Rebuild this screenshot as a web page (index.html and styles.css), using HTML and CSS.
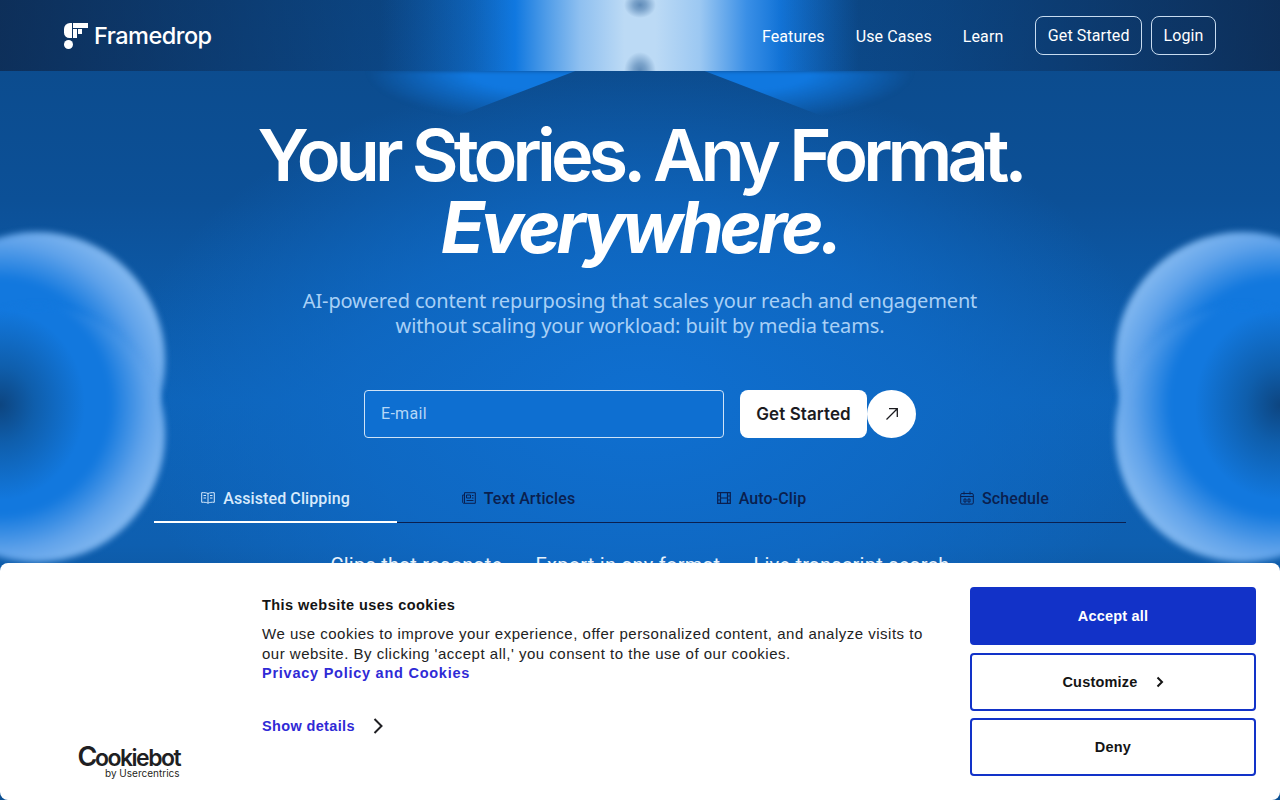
FILE: index.html
```html
<!DOCTYPE html>
<html lang="en">
  <head>
    <meta charset="UTF-8" />
    <meta name="viewport" content="width=device-width, initial-scale=1.0" />
    <title>Framedrop</title>
    <link rel="stylesheet" href="styles.css">
  </head>
  <body>
    <div class="page">
      <!-- background shapes -->
      <div class="beam">
        <span class="beam-dot beam-dot-top"></span>
        <span class="beam-dot beam-dot-low"></span>
      </div>
      <div class="wing wing-l"></div>
      <div class="wing wing-r"></div>
      <div class="blob blob-lt"></div>
      <div class="blob blob-lb"></div>
      <div class="blob blob-rt"></div>
      <div class="blob blob-rb"></div>
      <div class="shade shade-l"></div>
      <div class="shade shade-r"></div>

      <header class="topbar">
        <a class="brand" href="#">
          <svg class="brand-mark" width="24" height="26" viewBox="0 0 24 26">
            <path fill="#fff" d="M0 6a6 6 0 0 1 6-6h2v15H5.500A5.500 5.500 0 0 1 0 9.500z" />
            <path fill="#fff" d="M9 0h15v5H9z" />
            <path fill="#fff" d="M9 6h4v9H9zM14 6h4v5h-4z" />
            <circle fill="#fff" cx="4.500" cy="21.500" r="4.500" />
          </svg>
          <span>Framedrop</span>
        </a>
        <nav class="nav">
          <a href="#">Features</a>
          <a href="#">Use Cases</a>
          <a href="#">Learn</a>
        </nav>
        <div class="auth">
          <a class="ghost-btn" href="#">Get Started</a>
          <a class="ghost-btn" href="#">Login</a>
        </div>
      </header>

      <main class="hero">
        <h1>Your Stories. Any Format.<br /><em>Everywhere.</em></h1>
        <p class="lead">AI-powered content repurposing that scales your reach and engagement<br />without scaling your workload: built by media teams.</p>

        <form class="signup">
          <input type="text" placeholder="E-mail" />
          <button type="button" class="cta">Get Started</button>
          <span class="cta-arrow">
            <svg width="14" height="14" viewBox="0 0 14 14" fill="none" stroke="#1b1b1f" stroke-width="1.300">
              <path d="M1.500 12.500 12 2M4 1.700h8.300V10" />
            </svg>
          </span>
        </form>

        <div class="tabs">
          <div class="tab active">
            <svg width="14" height="12" viewBox="0 0 14 12" fill="none" stroke="currentColor"><path d="M7 1.500C5.500.7 3 .5.700.7v9.600c2.300-.2 4.800 0 6.300.9 1.500-.9 4-1.100 6.300-.9V.7C11 .5 8.500.7 7 1.500zM7 1.500v9.700M2.500 3.500h2.500M2.500 6h2.500M9 3.500h2.500M9 6h2.500" /></svg>
            Assisted Clipping
          </div>
          <div class="tab">
            <svg width="14" height="12" viewBox="0 0 14 12" fill="none" stroke="currentColor"><path d="M2.500.7h10.800v10.600H2.500zM2.500 3H.7v7a1.300 1.300 0 0 0 1.800 1.300M4.500 3h4v3h-4zM10 3.500h1.500M10 6h1.500M4.500 8.500h7" /></svg>
            Text Articles
          </div>
          <div class="tab">
            <svg width="14" height="12" viewBox="0 0 14 12" fill="none" stroke="currentColor" stroke-width="1.200"><path d="M.7.7h12.600v10.600H.7zM3.500.7v10.600M10.500.7v10.600M.7 4h2.800M.7 8h2.800M10.500 4h2.800M10.500 8h2.800M3.500 6h7" /></svg>
            Auto-Clip
          </div>
          <div class="tab">
            <svg width="14" height="14" viewBox="0 0 14 14" fill="none" stroke="currentColor"><path d="M2 2.500h10a1.300 1.300 0 0 1 1.300 1.300v8a1.300 1.300 0 0 1-1.300 1.300H2a1.300 1.300 0 0 1-1.300-1.300v-8A1.300 1.300 0 0 1 2 2.500zM4 .5v3M10 .5v3M.7 5.500h12.600M4 8h2v3H4zM8 8h2v3H8z" /></svg>
            Schedule
          </div>
        </div>

        <div class="subtabs">
          <span>Clips that resonate</span>
          <span>Export in any format</span>
          <span>Live transcript search</span>
        </div>
      </main>

      <!-- cookie banner -->
      <aside class="cookie">
        <div class="cookie-brand">
          <div class="cb-name"><span class="cb-c">C</span>ookiebot</div>
          <div class="cb-sub">by Usercentrics</div>
        </div>
        <div class="cookie-text">
          <h2>This website uses cookies</h2>
          <p>We use cookies to improve your experience, offer personalized content, and analyze visits to our website. By clicking 'accept all,' you consent to the use of our cookies.</p>
          <a class="policy" href="#">Privacy Policy and Cookies</a>
          <a class="details" href="#">
            Show details
            <svg width="10" height="16" viewBox="0 0 10 16" fill="none" stroke="#1f1f23" stroke-width="2"><path d="M1.500 1 8.500 8l-7 7" /></svg>
          </a>
        </div>
        <div class="cookie-actions">
          <button class="ck-btn ck-accept">Accept all</button>
          <button class="ck-btn">Customize
            <svg width="8" height="12" viewBox="0 0 8 12" fill="none" stroke="#141414" stroke-width="2"><path d="M1.500 1.500 6 6l-4.500 4.500" /></svg>
          </button>
          <button class="ck-btn">Deny</button>
        </div>
      </aside>
    </div>
  </body>
</html>
```
FILE: styles.css
```css
* {
  box-sizing: border-box;
}
html,
body {
  margin: 0;
  height: 100%;
}
body {
  font-family: "Roboto", "Noto Sans", sans-serif;
  color: #fff;
  overflow: hidden;
}
a {
  color: inherit;
  text-decoration: none;
}

.page {
  position: relative;
  width: 1280px;
  height: 800px;
  overflow: hidden;
  background:
    radial-gradient(ellipse 520px 330px at 640px 400px, #0f6fd0 0%, rgba(15, 107, 200, 0.75) 55%, rgba(15, 107, 200, 0) 100%),
    linear-gradient(180deg, #0c4a8a 0%, #0c5097 25%, #0d63b8 50%, #0e5fb0 68%, #0b4f92 80%);
}

/* background shapes */
.beam {
  position: absolute;
  left: 380px;
  top: 0;
  width: 520px;
  height: 71px;
  background: linear-gradient(90deg, rgba(16, 120, 224, 0) 0%, rgba(16, 120, 224, 0.6) 18%, #1078e0 26%, #4f9ce8 32%, #8fc0f0 38.500%, #bcdaf5 47%, #bcdaf5 53%, #9cc8f2 61.500%, #3a8fe6 70.500%, #1274d8 77%, rgba(16, 120, 224, 0) 92%);
}
.beam-dot {
  position: absolute;
  left: 244px;
  width: 32px;
  height: 26px;
  border-radius: 50%;
  background: radial-gradient(closest-side, #5f8bb8 0%, rgba(95, 139, 184, 0.7) 40%, rgba(95, 139, 184, 0) 100%);
}
.beam-dot-top {
  top: -8px;
}
.beam-dot-low {
  top: 52px;
  height: 38px;
  clip-path: inset(0 0 19px 0);
}
.wing {
  position: absolute;
  top: 71px;
  width: 240px;
  height: 70px;
  overflow: hidden;
}
.wing::before {
  content: "";
  display: block;
  width: 100%;
  height: 100%;
  background: radial-gradient(ellipse 170px 50px at 80% 0, #1078e0 0%, #1078e0 40%, rgba(16, 120, 224, 0) 100%);
  filter: blur(2px);
}
.wing-l {
  left: 345px;
  clip-path: polygon(0 0, 96% 0, 20% 100%, 0 100%);
}
.wing-r {
  left: 695px;
  clip-path: polygon(4% 0, 100% 0, 100% 100%, 80% 100%);
}
.wing-r::before {
  background: radial-gradient(ellipse 170px 50px at 20% 0, #1078e0 0%, #1078e0 40%, rgba(16, 120, 224, 0) 100%);
}
.blob {
  position: absolute;
  width: 256px;
  height: 256px;
  border-radius: 50%;
  filter: blur(3px);
}
.blob-lt {
  left: -91px;
  top: 232px;
  background: radial-gradient(circle 185px at 35% 62%, #1278de 0%, #1278de 60%, #5fa2ea 80%, #84b9f0 95%);
}
.blob-lb {
  left: -91px;
  top: 306px;
  background: radial-gradient(circle 185px at 35% 38%, #1278de 0%, #1278de 60%, #5fa2ea 80%, #84b9f0 95%);
}
.blob-rt {
  right: -91px;
  top: 232px;
  background: radial-gradient(circle 185px at 65% 62%, #1278de 0%, #1278de 60%, #5fa2ea 80%, #84b9f0 95%);
}
.blob-rb {
  right: -91px;
  top: 306px;
  background: radial-gradient(circle 185px at 65% 38%, #1278de 0%, #1278de 60%, #5fa2ea 80%, #84b9f0 95%);
}
.shade {
  position: absolute;
  top: 310px;
  width: 170px;
  height: 190px;
  border-radius: 50%;
  background: radial-gradient(closest-side, #0d4580 0%, rgba(13, 80, 145, 0.65) 40%, rgba(18, 120, 222, 0) 100%);
}
.shade-l {
  left: -85px;
}
.shade-r {
  right: -85px;
}

/* header */
.topbar {
  position: relative;
  display: flex;
  align-items: center;
  height: 71px;
  padding: 0 64px;
  background:
    linear-gradient(90deg, rgba(14, 34, 66, 0.68) 0%, rgba(10, 50, 100, 0.3) 28%, rgba(10, 50, 100, 0) 40%, rgba(10, 50, 100, 0) 60%, rgba(10, 50, 100, 0.3) 74%, rgba(14, 34, 66, 0.68) 100%);
}
.brand {
  display: flex;
  align-items: center;
  gap: 6px;
  margin-right: auto;
  font-family: "Inter", sans-serif;
  font-size: 23.500px;
  font-weight: 500;
  letter-spacing: -0.5px;
}
.brand-mark {
  margin-top: 1px;
}
.nav {
  display: flex;
  gap: 31px;
  font-size: 16px;
  letter-spacing: 0.1px;
  margin-right: 32px;
  padding-top: 2px;
}
.auth {
  display: flex;
  gap: 9px;
}
.ghost-btn {
  display: block;
  height: 39px;
  padding: 0 11.500px;
  line-height: 37px;
  font-size: 16px;
  letter-spacing: 0.1px;
  border: 1px solid #c8dcf0;
  border-radius: 8px;
}

/* hero */
.hero {
  position: relative;
  display: flex;
  flex-direction: column;
  align-items: center;
  padding-top: 48px;
}
.hero h1 {
  margin: 0;
  font-family: "Inter", sans-serif;
  font-size: 72px;
  line-height: 72px;
  font-weight: 600;
  letter-spacing: -4.9px;
  text-align: center;
}
.hero h1 em {
  font-weight: 700;
  font-style: italic;
  letter-spacing: -4.200px;
}
.lead {
  margin: 25px 0 0;
  font-family: "Noto Sans", sans-serif;
  font-size: 20px;
  line-height: 25px;
  letter-spacing: -0.14px;
  color: #a8d0f6;
  text-align: center;
}
.signup {
  display: flex;
  margin-top: 52px;
  height: 48px;
}
.signup input {
  width: 360px;
  height: 48px;
  padding: 0 16px 2px;
  margin-right: 16px;
  border: 1px solid #cfe3f7;
  border-radius: 4px;
  background: #0e6fd1;
  color: #fff;
  font-family: "Roboto", sans-serif;
  font-size: 16px;
  letter-spacing: 0.3px;
  outline: none;
}
.signup input::placeholder {
  color: #b5d7f7;
  opacity: 1;
}
.cta {
  width: 127px;
  height: 48px;
  border: 0;
  border-radius: 8px;
  background: #fff;
  color: #1b1b1f;
  font-family: "Inter", sans-serif;
  font-size: 17px;
  font-weight: 600;
  letter-spacing: 0.1px;
}
.cta-arrow {
  display: flex;
  align-items: center;
  justify-content: center;
  width: 49px;
  height: 48px;
  border-radius: 50%;
  background: #fff;
}
.tabs {
  display: grid;
  grid-template-columns: repeat(4, 243px);
  margin-top: 36px;
  border-bottom: 1px solid #0a1f4f;
}
.tab {
  position: relative;
  display: flex;
  align-items: center;
  justify-content: center;
  gap: 8px;
  height: 48px;
  font-size: 16px;
  font-weight: 500;
  letter-spacing: 0.1px;
  color: #0a1f4f;
}
.tab.active {
  color: #d7eafc;
}
.tab.active::after {
  content: "";
  position: absolute;
  left: 0;
  right: 0;
  bottom: -1px;
  height: 2px;
  background: #fff;
}
.subtabs {
  display: flex;
  gap: 33px;
  margin-top: 30px;
  font-size: 20px;
  letter-spacing: 0.25px;
  color: #e6f1fb;
}

/* cookie banner */
.cookie {
  position: absolute;
  left: 0;
  right: 0;
  top: 563px;
  bottom: 0;
  display: flex;
  background: #fff;
  border-radius: 8px;
  color: #141414;
  font-family: "Liberation Sans", Arial, sans-serif;
}
.cookie-brand {
  width: 262px;
  padding: 182px 0 0 77.500px;
  color: #1f1f23;
}
.cb-name {
  font-family: "Inter", sans-serif;
  font-size: 23px;
  line-height: 24px;
  height: 24px;
  font-weight: 600;
  letter-spacing: -1.500px;
}
.cb-c {
  font-size: 27px;
  line-height: 24px;
  letter-spacing: -2.500px;
}
.cb-sub {
  margin-top: -2px;
  padding-left: 27.500px;
  font-family: "Inter", sans-serif;
  font-size: 10px;
  line-height: 12px;
}
.cookie-text {
  width: 708px;
  padding: 33px 40px 0 0;
}
.cookie-text h2 {
  margin: 0;
  font-size: 14.500px;
  line-height: 18px;
  font-weight: 700;
  letter-spacing: 0.45px;
}
.cookie-text p {
  margin: 10px 0 0;
  font-size: 15px;
  line-height: 20px;
  letter-spacing: 0.5px;
  color: #222;
}
.policy {
  display: block;
  margin-top: -1px;
  font-size: 14.500px;
  line-height: 20px;
  font-weight: 700;
  letter-spacing: 0.75px;
  color: #2f2ad6;
}
.details {
  display: flex;
  align-items: center;
  gap: 18px;
  margin-top: 33px;
  font-size: 14.500px;
  line-height: 20px;
  font-weight: 700;
  letter-spacing: 0.35px;
  color: #2f2ad6;
}
.cookie-actions {
  display: flex;
  flex-direction: column;
  gap: 7.500px;
  width: 286px;
  padding-top: 24px;
}
.ck-btn {
  display: flex;
  align-items: center;
  justify-content: center;
  gap: 18px;
  height: 58px;
  border: 2px solid #1232c8;
  border-radius: 4px;
  background: #fff;
  color: #141414;
  font-family: "Liberation Sans", Arial, sans-serif;
  font-size: 14.500px;
  font-weight: 700;
  letter-spacing: 0.2px;
}
.ck-accept {
  background: #1232c8;
  color: #fff;
}
```
